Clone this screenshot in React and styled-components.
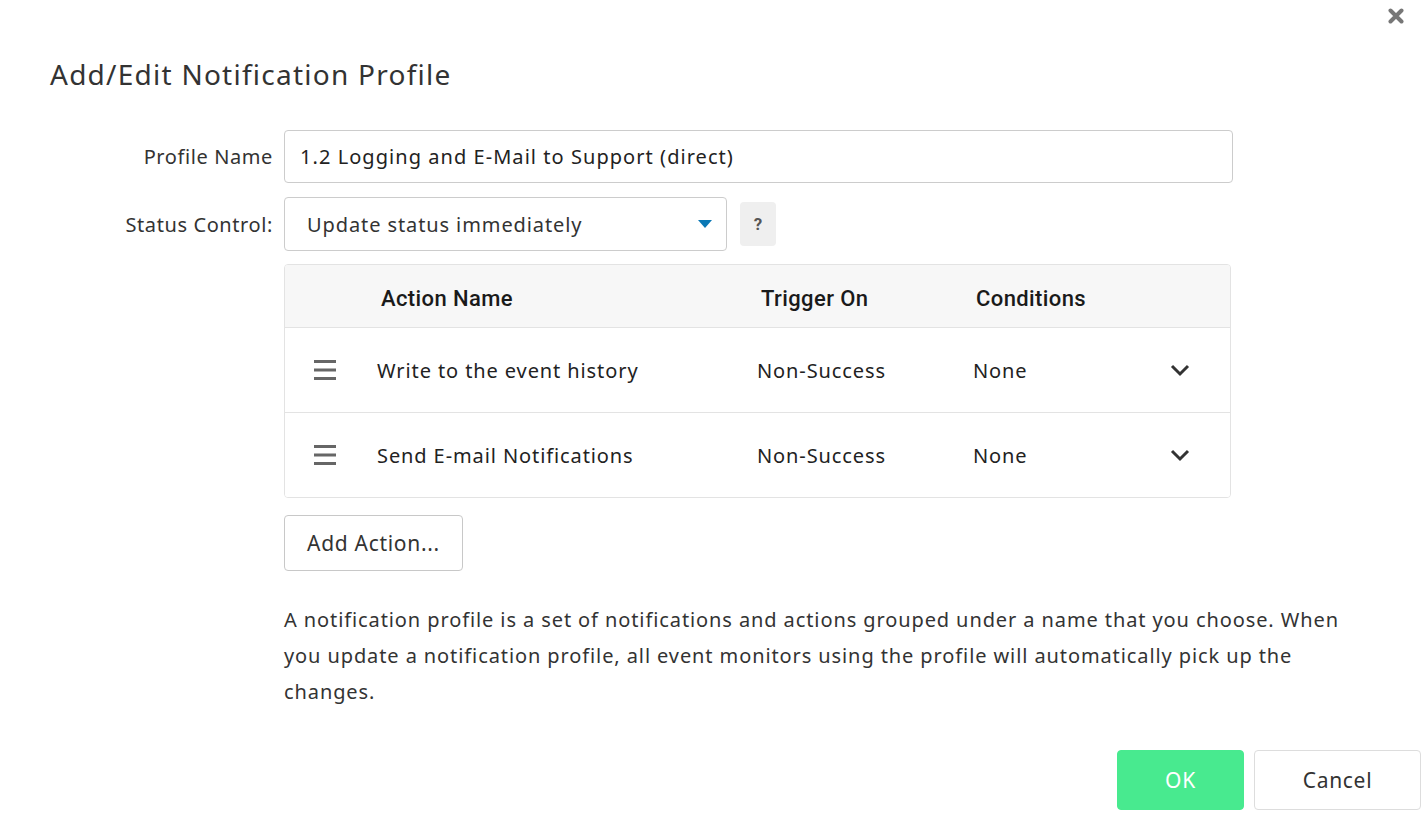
import React from "react";
import styled, { createGlobalStyle } from "styled-components";

const Global = createGlobalStyle`
    body {
        margin: 0;
        background: #fff;
        font-family: "Noto Sans", "Open Sans", sans-serif;
        color: #333;
    }
`;

const Dialog = styled.div`
    position: relative;
    width: 1426px;
    height: 828px;
    box-sizing: border-box;
    padding: 52px 0 0 50px;
`;

const Close = styled.div`
    position: absolute;
    top: 6px;
    right: 20px;
    width: 20px;
    height: 20px;
    display: flex;
    align-items: center;
    justify-content: center;
`;

const Title = styled.h1`
    margin: 0;
    font-size: 28px;
    font-weight: 400;
    line-height: 44px;
    letter-spacing: 1.25px;
    color: #333;
`;

const Form = styled.div`
    display: grid;
    grid-template-columns: 223px 949px;
    column-gap: 11px;
    row-gap: 14px;
    margin-top: 34px;
    align-items: center;
    font-size: 20px;
    letter-spacing: 0.9px;
`;

const Label = styled.label`
    text-align: right;
    font-size: 20px;
    letter-spacing: 0.6px;
    color: #333;
`;

const Input = styled.div`
    height: 53px;
    box-sizing: border-box;
    border: 1px solid #ccc;
    border-radius: 4px;
    padding: 0 15px;
    display: flex;
    align-items: center;
    letter-spacing: 1.05px;
    color: #222;
`;

const SelectRow = styled.div`
    display: flex;
    align-items: center;
    gap: 13px;
`;

const Select = styled.div`
    width: 443px;
    height: 54px;
    box-sizing: border-box;
    border: 1px solid #ccc;
    border-radius: 4px;
    padding: 0 14px 0 22px;
    display: flex;
    align-items: center;
    justify-content: space-between;
    color: #333;
`;

const Caret = styled.span`
    width: 0;
    height: 0;
    border-left: 7px solid transparent;
    border-right: 7px solid transparent;
    border-top: 8px solid #0a78b5;
`;

const Help = styled.div`
    width: 36px;
    height: 44px;
    border-radius: 4px;
    background: #efefef;
    display: flex;
    align-items: center;
    justify-content: center;
    font-family: Roboto, sans-serif;
    font-weight: 700;
    font-size: 17px;
    letter-spacing: 0;
    color: #555;
`;

const Table = styled.div`
    grid-column: 2;
    width: 945px;
    border: 1px solid #e3e3e3;
    border-radius: 4px;
    overflow: hidden;
    margin-top: -1px;
`;

const Row = styled.div`
    display: grid;
    grid-template-columns: 92px 380px 215px 1fr 60px;
    align-items: center;
    height: ${p => p.head ? "62px" : "84px"};
    background: ${p => p.head ? "#f7f7f7" : "#fff"};
    border-top: ${p => p.first ? "none" : "1px solid #e3e3e3"};
    color: #222;
`;

const HeadCell = styled.div`
    font-family: Roboto, sans-serif;
    font-weight: 500;
    font-size: 22px;
    letter-spacing: 0.4px;
    color: #1a1a1a;
    padding: 4px 0 0 ${p => p.pad || 0}px;
`;

const Cell = styled.div`
    padding-left: ${p => p.pad || 0}px;
`;

const Grip = styled.div`
    display: flex;
    padding-left: 29px;
`;

const ActionsArea = styled.div`
    grid-column: 2;
    margin-top: 3px;
`;

const Button = styled.button`
    height: ${p => p.tall ? "60px" : "56px"};
    width: ${p => p.w}px;
    box-sizing: border-box;
    border-radius: 4px;
    border: 1px solid ${p => p.primary ? "#48ea8f" : p.soft ? "#ddd" : "#c8c8c8"};
    background: ${p => p.primary ? "#48ea8f" : "#fff"};
    color: ${p => p.primary ? "#fff" : "#333"};
    font-family: "Noto Sans", sans-serif;
    font-size: 21px;
    letter-spacing: 0.7px;
    padding: 0;
    cursor: pointer;
`;

const Note = styled.p`
    margin: 31px 0 0;
    width: 1080px;
    line-height: 36px;
    letter-spacing: 0.9px;
    color: #333;
`;

const Footer = styled.div`
    display: flex;
    justify-content: flex-end;
    gap: 10px;
    margin-top: 40px;
    padding-right: 5px;
`;

const Hamburger = () => (
    <svg width="22" height="20" viewBox="0 0 22 20">
        <rect x="0" y="0" width="22" height="3" fill="#666" />
        <rect x="0" y="8.5" width="22" height="3" fill="#666" />
        <rect x="0" y="17" width="22" height="3" fill="#666" />
    </svg>
);

const Chevron = () => (
    <svg width="20" height="14" viewBox="0 0 20 14">
        <path d="M2 3 L10 11 L18 3" fill="none" stroke="#333" strokeWidth="3" />
    </svg>
);

const actions = [
    { name: "Write to the event history", trigger: "Non-Success", cond: "None" },
    { name: "Send E-mail Notifications", trigger: "Non-Success", cond: "None" },
];

export default function App() {
    return (
        <Dialog>
            <Global />
            <Close>
                <svg width="16" height="16" viewBox="0 0 16 16">
                    <path d="M2.5 2.5 L13.5 13.5 M13.5 2.5 L2.5 13.5" stroke="#777" strokeWidth="4" strokeLinecap="round" />
                </svg>
            </Close>
            <Title>Add/Edit Notification Profile</Title>
            <Form>
                <Label>Profile Name</Label>
                <Input>1.2 Logging and E-Mail to Support (direct)</Input>
                <Label>Status Control:</Label>
                <SelectRow>
                    <Select>
                        Update status immediately
                        <Caret />
                    </Select>
                    <Help>?</Help>
                </SelectRow>
                <Table>
                    <Row head first>
                        <span />
                        <HeadCell pad={4}>Action Name</HeadCell>
                        <HeadCell pad={4}>Trigger On</HeadCell>
                        <HeadCell pad={4}>Conditions</HeadCell>
                        <span />
                    </Row>
                    {actions.map(a => (
                        <Row key={a.name}>
                            <Grip><Hamburger /></Grip>
                            <Cell>{a.name}</Cell>
                            <Cell>{a.trigger}</Cell>
                            <Cell pad={1}>{a.cond}</Cell>
                            <Chevron />
                        </Row>
                    ))}
                </Table>
                <ActionsArea>
                    <Button w={179}>Add Action...</Button>
                    <Note>
                        A notification profile is a set of notifications and actions grouped under a name that you choose. When you update a notification profile, all event monitors using the profile will automatically pick up the changes.
                    </Note>
                </ActionsArea>
            </Form>
            <Footer>
                <Button primary tall w={127}>OK</Button>
                <Button soft tall w={167}>Cancel</Button>
            </Footer>
        </Dialog>
    );
}
